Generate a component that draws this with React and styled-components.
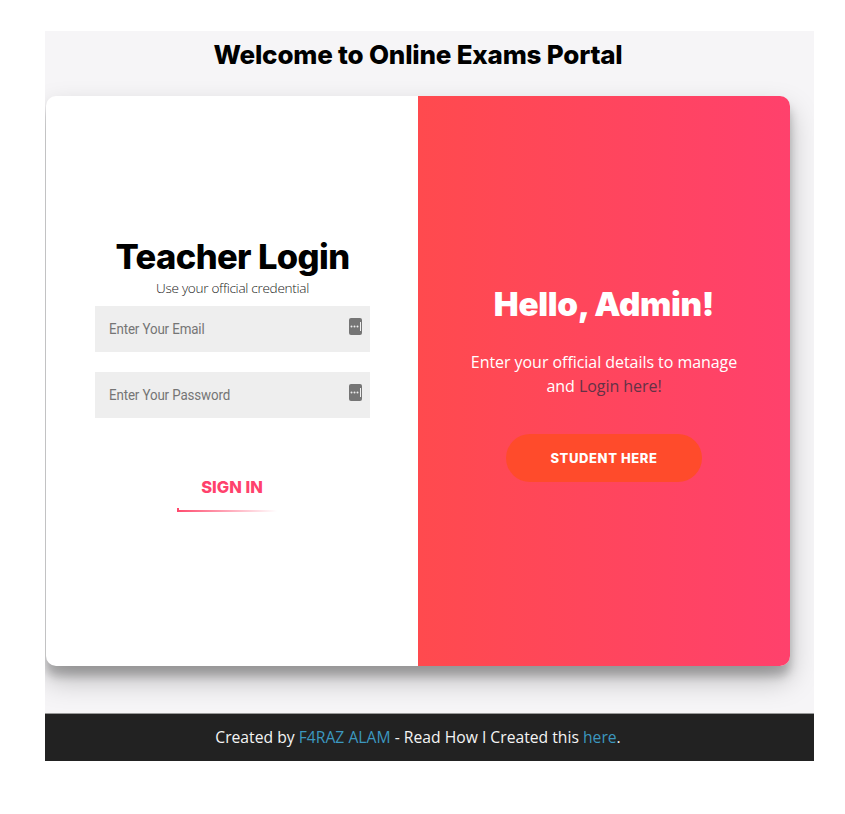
import React from "react";
import styled, { createGlobalStyle } from "styled-components";

const Global = createGlobalStyle`
  html, body { margin: 0; padding: 0; background: #fff; }
  * { box-sizing: border-box; }
`;

const Page = styled.div`
  width: 769px;
  height: 730px;
  margin: 31px 0 0 45px;
  background: #f6f5f7;
  display: flex;
  flex-direction: column;
  overflow: hidden;
  font-family: "Inter", "Liberation Sans", sans-serif;
`;

const PageTitle = styled.h2`
  margin: 0;
  height: 65px;
  padding-top: 7px;
  padding-right: 23px;
  text-align: center;
  font-size: 26px;
  line-height: 34px;
  font-weight: 800;
  letter-spacing: -0.2px;
  color: #000;
`;

const Card = styled.div`
  width: 744px;
  height: 570px;
  margin-left: 1px;
  border-radius: 10px;
  background: #fff;
  box-shadow: 0 14px 28px rgba(0, 0, 0, 0.25), 0 10px 10px rgba(0, 0, 0, 0.22);
  display: grid;
  grid-template-columns: 372px 372px;
  overflow: hidden;
  flex: none;
`;

const FormPanel = styled.form`
  display: flex;
  flex-direction: column;
  align-items: center;
  padding: 139px 48px 0 49px;
`;

const FormTitle = styled.h1`
  margin: 0;
  font-size: 34.5px;
  line-height: 44px;
  font-weight: 800;
  letter-spacing: -0.6px;
  color: #000;
`;

const FormHint = styled.span`
  font-family: "Open Sans", sans-serif;
  font-size: 13.6px;
  line-height: 18px;
  font-weight: 300;
  letter-spacing: -0.3px;
  color: #222;
  margin-bottom: 9px;
`;

const Field = styled.label`
  width: 275px;
  height: 46px;
  background: #eee;
  display: flex;
  align-items: center;
  justify-content: space-between;
  padding: 0 8px 0 14px;
  margin-bottom: 20px;
`;

const FieldInput = styled.input`
  flex: 1;
  min-width: 0;
  border: 0;
  outline: 0;
  background: transparent;
  padding: 0;
  font-family: "Roboto", sans-serif;
  font-size: 15px;
  letter-spacing: -0.15px;
  transform: scaleX(0.89);
  transform-origin: left center;
  &::placeholder { color: #757575; opacity: 1; }
`;

const KeyIcon = styled.svg`
  display: block;
  margin-top: -5px;
`;

const SignIn = styled.button`
  margin-top: 30px;
  margin-left: -1px;
  width: 110px;
  height: 44px;
  border: 0;
  padding: 0 0 6px;
  background:
    linear-gradient(to right, #ff4b6e, rgba(255, 75, 110, 0)) bottom left / 100px 2px no-repeat,
    linear-gradient(#ff4b6e, #ff4b6e) bottom left / 2px 4px no-repeat;
  color: #ff416c;
  font-family: "Inter", sans-serif;
  font-size: 16.5px;
  line-height: 20px;
  font-weight: 800;
  text-transform: uppercase;
`;

const Overlay = styled.section`
  background: linear-gradient(to right, #ff4a4e, #ff416c);
  color: #fff;
  display: flex;
  flex-direction: column;
  align-items: center;
  padding-top: 183px;
  text-align: center;
`;

const OverlayTitle = styled.h1`
  margin: 0 0 21px;
  font-size: 33.2px;
  line-height: 50px;
  font-weight: 900;
  letter-spacing: -0.3px;
`;

const OverlayText = styled.p`
  margin: 0 0 36px;
  font-family: "Open Sans", sans-serif;
  font-size: 16px;
  line-height: 24px;
  font-weight: 400;
  letter-spacing: -0.05px;
`;

const Muted = styled.span`
  color: #643246;
`;

const Ghost = styled.button`
  width: 196px;
  height: 48px;
  border: 0;
  border-radius: 25px;
  background: #ff4b2b;
  color: #fff;
  font-family: "Inter", sans-serif;
  font-size: 13px;
  font-weight: 800;
  letter-spacing: 0.6px;
  text-transform: uppercase;
`;

const Footer = styled.footer`
  margin-top: 47px;
  height: 48px;
  flex: none;
  background: #222;
  border-top: 1px solid #999;
  color: #f4f4f4;
  font-family: "Open Sans", sans-serif;
  font-size: 15.7px;
  font-weight: 400;
  display: flex;
  align-items: center;
  justify-content: center;
  padding: 0 23px 2px 0;
`;

const FooterLink = styled.a`
  color: #3c97bf;
  text-decoration: none;
  white-space: pre;
`;

const FooterText = styled.span`
  white-space: pre;
`;

const PasswordKey = () => (
  <KeyIcon width="13" height="17" viewBox="0 0 13 17">
    <rect x="0" y="0" width="13" height="17" rx="2" fill="#757575" />
    <circle cx="2.5" cy="8.5" r="1" fill="#eee" />
    <circle cx="5.5" cy="8.5" r="1" fill="#eee" />
    <circle cx="8.5" cy="8.5" r="1" fill="#eee" />
    <rect x="11" y="4" width="1" height="9" fill="#eee" />
  </KeyIcon>
);

export default function App() {
  return (
    <>
      <Global />
      <Page>
        <PageTitle>Welcome to Online Exams Portal</PageTitle>
        <Card>
          <FormPanel onSubmit={(e) => e.preventDefault()}>
            <FormTitle>Teacher Login</FormTitle>
            <FormHint>Use your official credential</FormHint>
            <Field>
              <FieldInput type="email" placeholder="Enter Your Email" />
              <PasswordKey />
            </Field>
            <Field>
              <FieldInput type="password" placeholder="Enter Your Password" />
              <PasswordKey />
            </Field>
            <SignIn type="submit">Sign In</SignIn>
          </FormPanel>
          <Overlay>
            <OverlayTitle>Hello, Admin!</OverlayTitle>
            <OverlayText>
              Enter your official details to manage
              <br />
              and <Muted>Login here!</Muted>
            </OverlayText>
            <Ghost type="button">Student Here</Ghost>
          </Overlay>
        </Card>
        <Footer>
          <FooterText>Created by </FooterText>
          <FooterLink href="#">F4RAZ ALAM</FooterLink>
          <FooterText> - Read How I Created this </FooterText>
          <FooterLink href="#">here</FooterLink>
          <FooterText>.</FooterText>
        </Footer>
      </Page>
    </>
  );
}
